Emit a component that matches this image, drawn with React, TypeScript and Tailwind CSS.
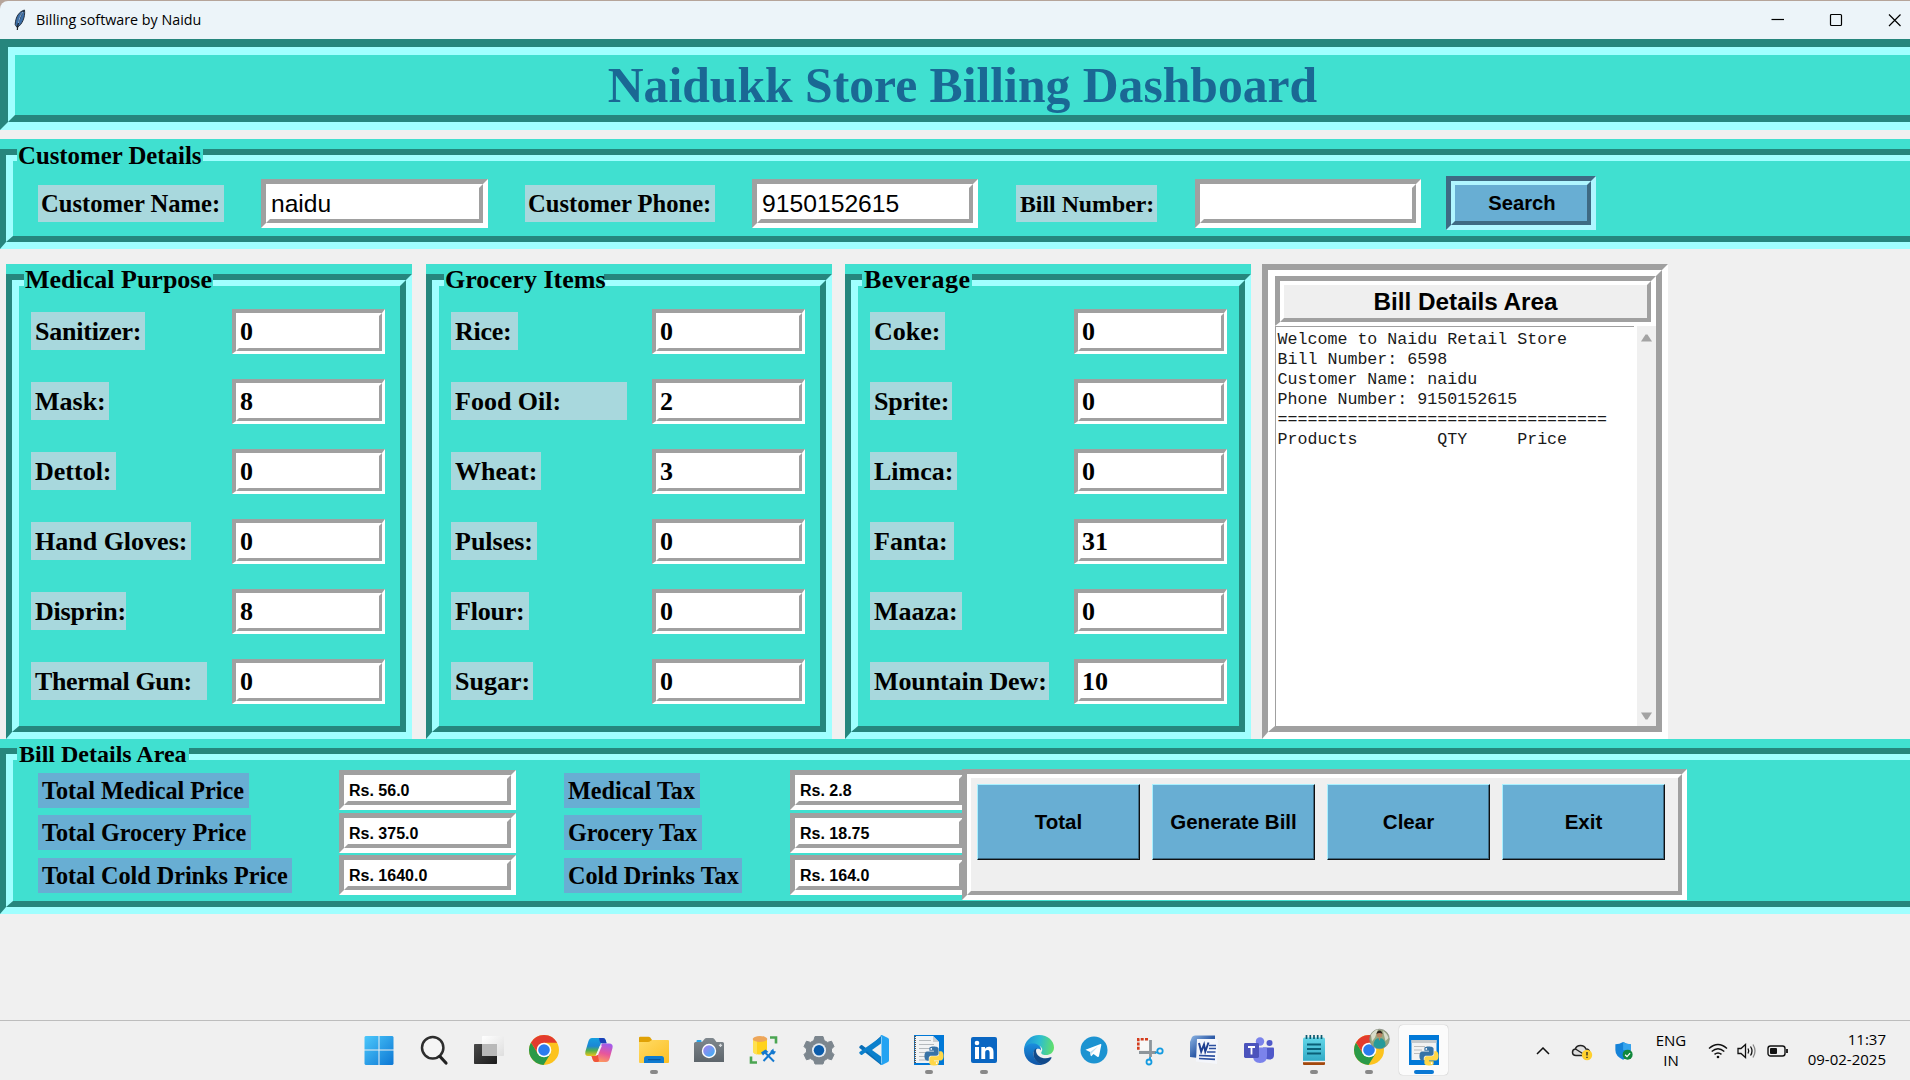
import React from "react";

const SERIF = "font-['Liberation_Serif',serif] font-bold text-black";
const SANS = "font-['Liberation_Sans',sans-serif] text-black";
const UI = "font-['Open_Sans',sans-serif]";

/* ---------- Tk style widgets ---------- */

type FrameProps = {
  title: string;
  titleClass: string;
  className: string;
  bodyClass?: string;
  children: React.ReactNode;
};

function LabelFrame({ title, titleClass, className, bodyClass = "", children }: FrameProps) {
  return (
    <section className={`relative flex shrink-0 flex-col bg-[#40e0d0] ${className}`}>
      <div className="flex grow flex-col border-[6px] border-b-[7px] border-t-[#26867d] border-r-[#a0ffff] border-b-[#a0ffff] border-l-[#26867d]">
        <div
          className={`grow border-[6px] border-l-[7px] border-t-[#a0ffff] border-r-[#26867d] border-b-[#26867d] border-l-[#a0ffff] ${bodyClass}`}
        >
          {children}
        </div>
      </div>
      <h2 className={`absolute bg-[#40e0d0] whitespace-pre ${SERIF} ${titleClass}`}>{title}</h2>
    </section>
  );
}

function Label({ text, className }: { text: string; className: string }) {
  return <div className={`shrink-0 whitespace-pre ${SERIF} ${className}`}>{text}</div>;
}

function BigEntry({ value, className }: { value: string; className: string }) {
  return (
    <div className={`shrink-0 border-[5px] border-t-[#a0a0a0] border-r-white border-b-white border-l-[#a0a0a0] ${className}`}>
      <div className="h-full border-[4px] border-t-white border-r-[#a0a0a0] border-b-[#a0a0a0] border-l-white bg-white">
        <div className="flex h-full items-center pt-[2px] pl-px whitespace-pre">{value}</div>
      </div>
    </div>
  );
}

function ItemEntry({ value }: { value: string }) {
  return (
    <div className="h-[45px] w-[153px] shrink-0 border-[4px] border-r-[3px] border-b-[3px] border-t-[#a0a0a0] border-r-white border-b-white border-l-[#a0a0a0]">
      <div className="flex h-full items-center border-[3px] border-t-white border-r-[#a0a0a0] border-b-[#a0a0a0] border-l-white bg-white">
        <span className={`pl-px text-[26px] leading-none ${SERIF}`}>{value}</span>
      </div>
    </div>
  );
}

type Item = { name: string; value: string; w: string };

function ItemPanel({ title, titleClass, className, labelCol, items }: {
  title: string; titleClass: string; className: string; labelCol: string; items: Item[];
}) {
  return (
    <LabelFrame title={title} className={`h-[475px] pt-[10px] ${className}`} titleClass={`top-0 text-[26px] leading-[32px] ${titleClass}`} bodyClass="pt-[10px] pl-[12px]">
      {items.map((it) => (
        <div key={it.name} className="flex h-[70px] items-center">
          <div className={`shrink-0 ${labelCol}`}>
            <Label text={it.name} className={`h-[38px] bg-[#a8d8dd] pl-[4px] text-[26px] leading-[39px] ${it.w}`} />
          </div>
          <ItemEntry value={it.value} />
        </div>
      ))}
    </LabelFrame>
  );
}

const medical: Item[] = [
  { name: "Sanitizer:", value: "0", w: "w-[114px] tracking-[-0.2px]" },
  { name: "Mask:", value: "8", w: "w-[78px]" },
  { name: "Dettol:", value: "0", w: "w-[85px]" },
  { name: "Hand Gloves:", value: "0", w: "w-[160px]" },
  { name: "Disprin:", value: "8", w: "w-[95px] tracking-[-0.2px]" },
  { name: "Thermal Gun:", value: "0", w: "w-[176px] tracking-[-0.35px]" },
];
const grocery: Item[] = [
  { name: "Rice:", value: "0", w: "w-[67px] tracking-[-0.3px]" },
  { name: "Food Oil:", value: "2", w: "w-[176px]" },
  { name: "Wheat:", value: "3", w: "w-[90px]" },
  { name: "Pulses:", value: "0", w: "w-[86px]" },
  { name: "Flour:", value: "0", w: "w-[78px] tracking-[-0.2px]" },
  { name: "Sugar:", value: "0", w: "w-[82px]" },
];
const beverage: Item[] = [
  { name: "Coke:", value: "0", w: "w-[75px]" },
  { name: "Sprite:", value: "0", w: "w-[82px] tracking-[-0.2px]" },
  { name: "Limca:", value: "0", w: "w-[87px]" },
  { name: "Fanta:", value: "31", w: "w-[84px]" },
  { name: "Maaza:", value: "0", w: "w-[92px]" },
  { name: "Mountain Dew:", value: "10", w: "w-[179px] tracking-[-0.1px]" },
];

const receipt = `Welcome to Naidu Retail Store
Bill Number: 6598
Customer Name: naidu
Phone Number: 9150152615
=================================
Products        QTY     Price`;

const totals = [
  { a: "Total Medical Price", aw: "w-[211px]", av: "Rs. 56.0", b: "Medical Tax", bw: "w-[136px]", bv: "Rs. 2.8" },
  { a: "Total Grocery Price", aw: "w-[213px]", av: "Rs. 375.0", b: "Grocery Tax", bw: "w-[138px]", bv: "Rs. 18.75" },
  { a: "Total Cold Drinks Price", aw: "w-[254px]", av: "Rs. 1640.0", b: "Cold Drinks Tax", bw: "w-[178px]", bv: "Rs. 164.0" },
];

/* ---------- Icons ---------- */

const PY =
  "M14.25.18l.9.2.73.26.59.3.45.32.34.34.25.34.16.33.1.3.04.26.02.2-.01.13V8.5l-.05.63-.13.55-.21.46-.26.38-.3.31-.33.25-.35.19-.35.14-.33.1-.3.07-.26.04-.21.02H8.77l-.69.05-.59.14-.5.22-.41.27-.33.32-.27.35-.2.36-.15.37-.1.35-.07.32-.04.27-.02.21v3.06H3.17l-.21-.03-.28-.07-.32-.12-.35-.18-.36-.26-.36-.36-.35-.46-.32-.59-.28-.73-.21-.88-.14-1.05-.05-1.23.06-1.22.16-1.04.24-.87.32-.71.36-.57.4-.44.42-.33.42-.24.4-.16.36-.1.32-.05.24-.01h.16l.06.01h8.16v-.83H6.18l-.01-2.75-.02-.37.05-.34.11-.31.17-.28.25-.26.31-.23.38-.2.44-.18.51-.15.58-.12.64-.1.71-.06.77-.04.84-.02 1.27.05z";

function Python() {
  return (
    <g transform="translate(10.5 11.5) scale(.79)">
      <path d={PY} fill="#3873a6" />
      <path d={PY} fill="#ffd748" transform="rotate(180 12 12)" />
      <circle cx="8.6" cy="3.1" r="1.1" fill="#fff" />
      <circle cx="15.4" cy="20.9" r="1.1" fill="#fff" />
    </g>
  );
}

function ChromeArt() {
  return (
    <>
      <circle cx="15" cy="15" r="15" fill="#fcc31e" />
      <path d="M14.5 30L21.5 18.7L8.9 18.5L2 7.5A15 15 0 0 0 14.500 30z" fill="#2a9a48" />
      <path d="M2 7.500L8.900 18.500L15 7.800H28.200A15 15 0 0 0 2 7.500z" fill="#e33b2e" />
      <circle cx="15" cy="15" r="7.300" fill="#fff" />
      <circle cx="15" cy="15" r="5.800" fill="#2b7cee" />
    </>
  );
}

const icons: { id: string; run?: "grey" | "blue"; art: React.ReactNode }[] = [
  {
    id: "start",
    art: (
      <>
        <defs><linearGradient id="win" x1="0" y1="0" x2="1" y2="1" gradientUnits="objectBoundingBox"><stop stopColor="#4cc8fb" /><stop offset="1" stopColor="#0d77d4" /></linearGradient></defs>
        <path fill="url(#win)" d="M1.500 1H14.500V14.500H.500V2zM15.500 1H28.500L29.500 2V14.500H15.500zM.500 15.500H14.500V30H1.500L.500 29zM15.500 15.500H29.500V29L28.500 30H15.500z" />
      </>
    ),
  },
  {
    id: "search",
    art: (
      <>
        <circle cx="13.700" cy="12.800" r="10.700" fill="#f5f5f5" stroke="#2e2e2e" strokeWidth="2.500" />
        <path d="M21 21.500L27 28" stroke="#222" strokeWidth="3.200" strokeLinecap="round" />
      </>
    ),
  },
  {
    id: "taskview",
    art: (
      <>
        <defs>
          <linearGradient id="tv1" x1="0" y1="0" x2="1" y2="1"><stop stopColor="#4a4a4a" /><stop offset="1" stopColor="#1b1b1b" /></linearGradient>
          <linearGradient id="tv2" x1="0" y1="0" x2="1" y2="1"><stop stopColor="#fff" /><stop offset="1" stopColor="#dedede" /></linearGradient>
        </defs>
        <rect y="9" width="23" height="20" rx=".8" fill="url(#tv1)" />
        <rect x="8" y="1" width="22" height="20" rx=".8" fill="url(#tv2)" />
        <rect x="8" y="9" width="15" height="12" fill="#b9b9b9" />
      </>
    ),
  },
  { id: "chrome", art: <ChromeArt /> },
  {
    id: "copilot",
    art: (
      <>
        <defs>
          <linearGradient id="cp1" x1="0" y1="0" x2="0" y2="1"><stop stopColor="#15a0e0" /><stop offset=".45" stopColor="#1b86d6" /><stop offset=".7" stopColor="#52b04e" /><stop offset="1" stopColor="#ecc419" /></linearGradient>
          <linearGradient id="cp2" x1=".6" y1="0" x2=".3" y2="1"><stop stopColor="#a45bea" /><stop offset=".5" stopColor="#e8569b" /><stop offset="1" stopColor="#ffa15a" /></linearGradient>
        </defs>
        <path d="M8 3H19q2 0 2.600 2L22.500 8H17l-4 11q-.700 2-2.600 2H4q-3.500 0-2.600-4.500L4.500 6Q5.500 3 8 3z" fill="url(#cp1)" />
        <path d="M15 3h4q2 0 2.600 2l1 3.500H18q-1.500 0-2.200-2z" fill="#1b3fb8" />
        <path d="M22 27H11.500q-2 0-2.600-2L7.500 21h4q1.500 0 2.200-2L17 10q.700-1.500 2.600-1.500H25q4.500 0 3.500 4.500L25.500 24Q24.500 27 22 27z" fill="url(#cp2)" />
        <path d="M7.500 21h4q1.500 0 2.200-1.500L15 26q-.5 1-2 1h-1.500q-2 0-2.600-2z" fill="#f0553c" />
        <path d="M16 10.500h2L14 20h-2.200z" fill="#f3f0f5" />
      </>
    ),
  },
  {
    id: "explorer", run: "grey",
    art: (
      <>
        <defs><linearGradient id="fo" x1="0" y1="0" x2="1" y2="1"><stop stopColor="#ffdb66" /><stop offset="1" stopColor="#fcbf24" /></linearGradient></defs>
        <path d="M0 3q0-1.200 1.200-1.200H9.500q1 0 1.800.8L13 5v3H0z" fill="#e0a106" />
        <path d="M0 7H9q1.500 0 2.400-1T14 5H29q1 0 1 1V27q0 1-1 1H1q-1 0-1-1z" fill="url(#fo)" />
        <path d="M5 28V23.500q0-2.500 2.500-2.500h15q2.500 0 2.500 2.500V28z" fill="#0f7bd0" />
        <path d="M9 24.700H21.500" stroke="#0a4f92" />
      </>
    ),
  },
  {
    id: "camera",
    art: (
      <>
        <defs>
          <linearGradient id="cam" x1="0" y1="0" x2="0" y2="1"><stop stopColor="#80888e" /><stop offset="1" stopColor="#5d656b" /></linearGradient>
          <linearGradient id="lens" x1="0" y1="0" x2="1" y2="1"><stop stopColor="#a97ff0" /><stop offset="1" stopColor="#38b3f4" /></linearGradient>
        </defs>
        <rect x="2.500" y="5" width="5" height="3" rx="1" fill="#27a4ea" />
        <path d="M0 8.500q0-1.500 1.500-1.500H8L10.500 4q.7-1 2-1h6q1 0 1.800 1L22.500 7h6Q30 7 30 8.500V27H0z" fill="url(#cam)" />
        <circle cx="15" cy="16" r="7.200" fill="#fff" />
        <circle cx="15" cy="16" r="5.800" fill="url(#lens)" />
        <path d="M26.500 8.800v3.200M24.900 10.400h3.200" stroke="#d8dcdf" strokeWidth="1.300" />
      </>
    ),
  },
  {
    id: "database",
    art: (
      <>
        <path d="M4 4V17q2 3 7 2.500t7-2.500V4z" fill="#ffd21a" />
        <path d="M4 4V17q1 2 4 2.500V4z" fill="#ffe04f" />
        <ellipse cx="11" cy="4" rx="7.300" ry="3" fill="#eda659" />
        <path d="M21 2.500H27V8.500M2 21.500V27.500H8" stroke="#4ba552" strokeWidth="2.600" fill="none" />
        <path d="M14.500 26L24.500 15.500M15 16.500L25 26.500" stroke="#1479cf" strokeWidth="2" />
        <path d="M12 17.500l4.500-3 3 2.500-3.500 1.500-2 2zM21.500 16l3-2.500v2.500l2.500.500-2 3-3-.500z" fill="#1479cf" />
      </>
    ),
  },
  {
    id: "settings",
    art: (
      <>
        <path d="M11 1.500h8l1.200 4 3.300 1.900 4-1.200 2.500 5.300-2.500 2.500v3l2.500 2.500-2.500 5.300-4-1.200-3.300 1.900-1.200 3.500h-8l-1.200-3.500-3.300-1.900-4 1.200L0 19.500 2.500 17v-3L0 11.500l2.500-5.300 4 1.200 3.300-1.900z" fill="#7c868e" stroke="#7c868e" strokeLinejoin="round" />
        <circle cx="15" cy="15.300" r="7" fill="#e3ebf2" />
        <circle cx="15" cy="15.300" r="5.200" fill="#0b5cab" />
      </>
    ),
  },
  {
    id: "vscode",
    art: (
      <>
        <path d="M22 1L8 13.800 3.300 10.200q-.8-.5-1.500 0L.5 11.500q-.6.700 0 1.400L22 30z" fill="#0a6db5" />
        <path d="M22 29L8 16.200 3.300 19.800q-.8.500-1.500 0L.5 18.500q-.6-.7 0-1.400L22 2z" fill="#0c80cc" />
        <path d="M22 8.500L13 15l9 6.500z" fill="#f0f0f0" />
        <path d="M21.500.300Q22.500-.300 23.500.300L29 3q1 .5 1 1.700V25.300q0 1.200-1 1.700l-5.500 2.700q-1 .500-2-.100L22.500 28V2z" fill="#24a3f2" />
      </>
    ),
  },
  {
    id: "idle", run: "grey",
    art: (
      <>
        <rect width="30" height="30" fill="#0078d7" />
        <path d="M1 1H19l6 6V28H1z" fill="#f1f3f4" />
        <path d="M1 1v27" stroke="#555" strokeDasharray="1 1" strokeWidth="2" />
        <path d="M5 5.500H17M5 9.500H20M5 13.500H18M5 17.500H13M5 21.500H12M5 25H12" stroke="#b5babd" strokeWidth="1.200" />
        <path d="M19 1v6h6z" fill="#c9ced1" />
        <Python />
      </>
    ),
  },
  {
    id: "linkedin", run: "grey",
    art: (
      <>
        <rect x="2" y="2" width="26" height="26" rx="2" fill="#0a66c2" />
        <path d="M6 12h4v12H6zM12.300 12H16v1.700q1.200-2 3.900-2c3.600 0 4.600 2.300 4.600 5.600V24h-3.900v-6c0-1.600-.2-3-2-3-1.900 0-2.400 1.300-2.400 3v6h-3.900z" fill="#fff" />
        <circle cx="8" cy="8" r="2.300" fill="#fff" />
      </>
    ),
  },
  {
    id: "edge",
    art: (
      <>
        <defs>
          <linearGradient id="ed1" x1="0" y1=".4" x2="1" y2=".5"><stop stopColor="#1b8fd9" /><stop offset=".5" stopColor="#2cbcd3" /><stop offset="1" stopColor="#62e069" /></linearGradient>
          <linearGradient id="ed2" x1="0" y1="0" x2="0" y2="1"><stop stopColor="#1a8ede" /><stop offset="1" stopColor="#1054a6" /></linearGradient>
        </defs>
        <path d="M0 15C.4 6 7 0 15 0 24 0 30 6 30 12.500c0 5-4 7.500-8 7.500-4 0-5.500-1.500-4.500-3 2-3 0-6.500-5-6.500C7 10.500 2 12 0 15z" fill="url(#ed1)" />
        <path d="M0 15C1 10.500 5 8 10 8.500c5 .500 7.500 4 7 7-1-3-8-2.500-7.500 4C10 25 15 28.500 19 29.500 9 32 0 25 0 15z" fill="url(#ed2)" />
        <path d="M10 15.500c-2.500 7 3 13 9 14 4-1 7-3.500 8.500-6.500.3-.8-.3-1-1-.7C20 25 12.500 22 12 16q0-1.500 1-3-2 .5-3 2.500z" fill="#114a8b" />
      </>
    ),
  },
  {
    id: "telegram",
    art: (
      <>
        <circle cx="15" cy="15" r="13.500" fill="#1c93d1" />
        <path d="M6.500 14.800L21.500 9q1-.3.800 1L20 21q-.4 1.400-1.700.7L14.500 19l-2 2q-.5.400-.7-.3L11 17z" fill="#fff" />
        <path d="M11 17l8-5.500-6.500 7-.7 2.300z" fill="#bfdff0" />
      </>
    ),
  },
  {
    id: "snip",
    art: (
      <>
        <path d="M14 4.300H4.300V15" stroke="#d43c1c" strokeWidth="2.600" strokeDasharray="3 1.300" fill="none" />
        <rect x="6" y="6" width="9" height="9" fill="#f8f8f8" />
        <path d="M16.500 5V22M5 17.500H22" stroke="#8d959b" strokeWidth="2.800" />
        <circle cx="26" cy="16" r="2.700" fill="none" stroke="#159be0" strokeWidth="1.800" />
        <circle cx="15" cy="27" r="2.500" fill="none" stroke="#159be0" strokeWidth="1.800" />
        <path d="M21 18l3-1M16 22v3" stroke="#159be0" strokeWidth="1.800" />
      </>
    ),
  },
  {
    id: "word",
    art: (
      <>
        <defs><linearGradient id="wd" x1="0" y1="0" x2="1" y2="1"><stop stopColor="#8eb6e4" /><stop offset=".5" stopColor="#2f5ca8" /><stop offset="1" stopColor="#1d3e88" /></linearGradient></defs>
        <path d="M3 2Q4 .5 6 .5H26V25L1 22V7z" fill="url(#wd)" />
        <path d="M8 4H27.500L29 5.500 28 29 7 26.500z" fill="#f4f6fb" />
        <path d="M20 10.500h7M20 13.500h7M10 20.500l16 .700M10 23.500l16 .900M18 17h8.500" stroke="#2b4fa0" strokeWidth="1.700" />
        <path d="M10 8l2.200 8.500L15 9.500l1.300 7L19.500 7.500" stroke="#1e3f90" strokeWidth="2" fill="none" />
      </>
    ),
  },
  {
    id: "teams",
    art: (
      <>
        <circle cx="16" cy="6.500" r="4.200" fill="#7b83eb" />
        <circle cx="25.500" cy="8" r="3" fill="#5059c9" />
        <path d="M19 12.500H29q1 0 1 1V20q0 4.500-4.500 4.500T19 21z" fill="#5059c9" />
        <path d="M9 12.500H22q1 0 1 1V21q0 7-7 7t-7-7z" fill="#7b83eb" />
        <rect y="8" width="15" height="15" rx="1.400" fill="#4b53bc" />
        <path d="M4 12h7M7.500 12v7.500" stroke="#fff" strokeWidth="1.800" />
      </>
    ),
  },
  {
    id: "notepad", run: "grey",
    art: (
      <>
        <defs><linearGradient id="np" x1="0" y1="0" x2="0" y2="1"><stop stopColor="#63d6e8" /><stop offset="1" stopColor="#2fa8c4" /></linearGradient></defs>
        <path d="M4 26H26v3q0 1-1 1H5q-1 0-1-1z" fill="#a3480d" />
        <path d="M4 4q0-1.500 1.500-1.500h19Q26 2.500 26 4V27H4z" fill="url(#np)" />
        <path d="M4 26.500H26" stroke="#f2f2f2" strokeWidth="1.400" />
        <path d="M8 9.500H22M8 14H22M8 18.500H22" stroke="#0a5f77" strokeWidth="1.800" />
        <path d="M7.500 0v4M11.300 0v4M15 0v4M18.700 0v4M22.500 0v4" stroke="#0b5a70" strokeWidth="1.700" />
      </>
    ),
  },
  {
    id: "chrome-profile", run: "grey",
    art: (
      <>
        <ChromeArt />
        <circle cx="25.500" cy="4" r="9.800" fill="#97a77f" stroke="#878a80" strokeWidth=".8" />
        <path d="M17 0q3-5 7-5.500l-3 8-3 4zM29-4q4 2 5.500 7l-3 3z" fill="#d8dccb" />
        <path d="M19.500 11q0-8 6-8t6 8q-2.500 2.500-6 2.500t-6-2.500z" fill="#269a9a" />
        <circle cx="25.500" cy="-.500" r="2.900" fill="#b98562" />
        <path d="M22.500-1q.5-3.500 3-3.500t3 3.500q-3-1.800-6 0z" fill="#2c241e" />
        <path d="M24.500 3l1 3 1-3z" fill="#b98562" />
      </>
    ),
  },
  {
    id: "tk", run: "blue",
    art: (
      <>
        <rect width="30" height="30" fill="#0078d7" />
        <rect x="2.500" y="5" width="25" height="20" fill="#f2f2f2" />
        <path d="M2.500 6.500h25" stroke="#c5c9cc" strokeWidth="3" />
        <path d="M5 11.500H16M5 15H13M5 18.500H11" stroke="#bcbcbc" strokeWidth="1.200" />
        <Python />
      </>
    ),
  },
];

function Feather() {
  return (
    <svg className="ml-[14px] h-[22px] w-[12px]" viewBox="0 0 12 22">
      <path d="M10.500 1C5 2.500 1.500 8 1.200 15.500L3 18.500C8 16 11.500 8 10.500 1z" fill="#3b6ea8" stroke="#26313f" strokeWidth="1" />
      <path d="M9.500 2C6 7 4 12 3.300 21" stroke="#1c2027" strokeWidth="1.200" fill="none" />
      <path d="M9 3C6.500 6 5 10 4.500 14" stroke="#8fb6e0" strokeWidth="1" fill="none" />
    </svg>
  );
}

/* ---------- Page ---------- */

export default function App() {
  return (
    <div className="flex h-[1080px] w-[1910px] flex-col overflow-hidden bg-[#f0f0f0]">
      <div className="h-[39px] shrink-0 bg-[#b5a49a] pt-px">
        <header className="flex h-full items-center rounded-tl-[8px] bg-[#ecf4f9]">
          <Feather />
          <span className={`ml-[10px] pt-px text-[14.3px] leading-none text-black ${UI}`}>Billing software by Naidu</span>
          <svg className="ml-auto mr-[8px] h-[14px] w-[131px]" viewBox="0 0 131 14" fill="none" stroke="#000" strokeWidth="1.200">
            <path d="M0.500 6.500h12.500" />
            <rect x="59.500" y="1.500" width="11" height="11" rx="1" />
            <path d="M118 1.500l11.500 11.500M129.500 1.500l-11.500 11.500" />
          </svg>
        </header>
      </div>

      <div className="h-[91px] w-[1925px] shrink-0 border-[8px] border-t-[#26867d] border-r-[#a0ffff] border-b-[#a0ffff] border-l-[#26867d] bg-[#40e0d0]">
        <div className="h-full border-[7px] border-t-[8px] border-t-[#a0ffff] border-r-[#26867d] border-b-[#26867d] border-l-[#a0ffff]">
          <h1 className="text-center font-['Liberation_Serif',serif] text-[49.65px] leading-[61px] font-bold text-[#1a6894]">
            Naidukk Store Billing Dashboard
          </h1>
        </div>
      </div>

      <LabelFrame
        title="Customer Details"
        className="mt-[9px] h-[110px] w-[1925px] pt-[10px]"
        titleClass="left-[17px] top-[2px] h-[28px] w-[186px] pl-px text-[24.8px] leading-[29px]"
        bodyClass="flex items-center pt-[9px] pl-[25px]"
      >
        <Label text="Customer Name:" className="h-[37px] w-[186px] bg-[#a8d8dd] pl-[3px] text-[24.6px] leading-[38px]" />
        <BigEntry value="naidu" className={`ml-[37px] h-[49px] w-[227px] text-[24.6px] leading-none ${SANS}`} />
        <Label text="Customer Phone:" className="ml-[37px] h-[37px] w-[190px] bg-[#a8d8dd] pl-[3px] text-[24.6px] leading-[38px]" />
        <BigEntry value="9150152615" className={`ml-[37px] h-[49px] w-[226px] text-[24.7px] leading-none ${SANS}`} />
        <Label text="Bill Number:" className="ml-[38px] h-[37px] w-[141px] bg-[#a8d8dd] pl-[4px] text-[23.8px] leading-[38px]" />
        <BigEntry value="" className="ml-[38px] h-[49px] w-[226px]" />
        <button className="ml-[25px] h-[54px] w-[150px] shrink-0 border-[5px] border-t-[#3e6a83] border-r-[#b0f6ff] border-b-[#b0f6ff] border-l-[#3e6a83] bg-[#68aed3]">
          <span className={`flex h-full items-center justify-center border-[4px] border-t-[#b0f6ff] border-r-[#3e6a83] border-b-[#3e6a83] border-l-[#b0f6ff] pl-[2px] text-[20.2px] leading-none font-bold ${SANS}`}>
            Search
          </span>
        </button>
      </LabelFrame>

      <div className="mt-[15px] flex h-[475px] shrink-0">
        <ItemPanel title="Medical Purpose" className="ml-[6px] w-[406px]" titleClass="left-[18px] w-[189px] pl-px" labelCol="w-[201px]" items={medical} />
        <ItemPanel title="Grocery Items" className="ml-[14px] w-[406px]" titleClass="left-[18px] w-[160px] pl-px" labelCol="w-[201px]" items={grocery} />
        <ItemPanel title="Beverage" className="ml-[13px] w-[406px]" titleClass="left-[17px] w-[110px] pl-[2px] tracking-[0.5px]" labelCol="w-[204px]" items={beverage} />

        <section className="ml-[11px] w-[406px] shrink-0 border-[6px] border-b-[7px] border-t-[#a0a0a0] border-r-white border-b-white border-l-[#a0a0a0]">
          <div className="flex h-full flex-col border-[6px] border-l-[7px] border-t-white border-r-[#a0a0a0] border-b-[#a0a0a0] border-l-white bg-white">
            <div className="h-[50px] shrink-0 border-[5px] border-b-[4px] border-t-[#a0a0a0] border-r-white border-b-white border-l-[#a0a0a0]">
              <div className={`h-full border-[4px] border-t-white border-r-[#a0a0a0] border-b-[#a0a0a0] border-l-white bg-[#efefef] text-center text-[24.3px] leading-[33px] font-bold ${SANS}`}>
                Bill Details Area
              </div>
            </div>
            <div className="flex grow">
              <div className="mr-[3px] grow border-t border-l border-[#a0a0a0] bg-white">
                <pre className="pt-[3px] pl-[1.5px] font-['Liberation_Mono',monospace] text-[16.65px] leading-[20px] text-[#1a1a1a]">{receipt}</pre>
              </div>
              <div className="flex w-[19px] shrink-0 flex-col justify-between bg-[#f0f0f0] px-[4px] pt-[8px] pb-[6px]">
                <svg className="h-[8px] w-[11px]" viewBox="0 0 11 8"><path d="M4.500.500h2L11 7.500H0z" fill="#a3a3a3" /></svg>
                <svg className="h-[8px] w-[11px]" viewBox="0 0 11 8"><path d="M4.500 7.500h2L11 .500H0z" fill="#a3a3a3" /></svg>
              </div>
            </div>
          </div>
        </section>
      </div>

      <LabelFrame
        title="Bill Details Area"
        className="h-[175px] w-[1925px] pt-[9px]"
        titleClass="left-[17px] top-[1px] h-[27px] w-[172px] pl-[2px] text-[24px] leading-[28px]"
        bodyClass="flex pl-[25px]"
      >
        <div className="mt-[9px] shrink-0">
          {totals.map((t) => (
            <div key={t.a} className="flex h-[42.5px] items-center">
              <div className="w-[301px]">
                <Label text={t.a} className={`h-[35px] bg-[#68aed3] pl-[4px] text-[24.2px] leading-[35px] ${t.aw}`} />
              </div>
              <BigEntry value={t.av} className={`h-[40px] w-[177px] text-[16px] leading-[20px] font-bold ${SANS}`} />
              <div className="ml-[48px] w-[226px]">
                <Label text={t.b} className={`h-[35px] bg-[#68aed3] pl-[4px] text-[24.2px] leading-[35px] ${t.bw}`} />
              </div>
              <BigEntry value={t.bv} className={`h-[40px] w-[178px] text-[16px] leading-[20px] font-bold ${SANS}`} />
            </div>
          ))}
        </div>
        <div className="mt-[9px] -ml-[6px] h-[131px] w-[725px] shrink-0 border-[5px] border-t-[#a0a0a0] border-r-white border-b-white border-l-[#a0a0a0]">
          <div className="flex h-full gap-[12px] border-[4px] border-t-white border-r-[#a0a0a0] border-b-[#a0a0a0] border-l-white bg-[#efefef] pt-[6px] pl-[6px]">
            {["Total", "Generate Bill", "Clear", "Exit"].map((b) => (
              <button key={b} className={`h-[76px] w-[163px] shrink-0 border border-t-[#a8f0ff] border-r-[#101010] border-b-[#101010] border-l-[#a8f0ff] bg-[#68aed3] text-[20.5px] font-bold shadow-[inset_-1px_-1px_0_#3e6a83] ${SANS}`}>
                {b}
              </button>
            ))}
          </div>
        </div>
      </LabelFrame>

      <footer className="mt-auto flex h-[60px] shrink-0 border-t border-[#bdbdbd] bg-[#f0f0f0]">
        <nav className="ml-[351px] flex">
          {icons.map((ic) => (
            <div key={ic.id} className="flex w-[55px] shrink-0 justify-center pt-[4px]">
              <div className={`flex h-[50px] w-[49px] flex-col items-center rounded-[4px] pt-[10px] ${ic.run === "blue" ? "bg-[#fbfbfb] shadow-[0_0_1px_#999]" : ""}`}>
                <svg className="h-[30px] w-[30px] overflow-visible" viewBox="0 0 30 30">{ic.art}</svg>
                {ic.run && <div className={`mt-[5px] h-[4px] rounded-full ${ic.run === "blue" ? "w-[20px] bg-[#0a78d4]" : "w-[8px] bg-[#888]"}`} />}
              </div>
            </div>
          ))}
        </nav>
        <div className={`mr-[24px] ml-auto flex items-center text-[15px] leading-[20px] text-black ${UI}`}>
          <svg className="h-[8px] w-[14px]" viewBox="0 0 14 8" fill="none" stroke="#111" strokeWidth="1.500"><path d="M1 7l6-6 6 6" /></svg>
          <svg className="ml-[21px] h-[20px] w-[22px]" viewBox="0 0 22 20">
            <path d="M5 14.500q-3.500-.2-3.500-3.300 0-2.700 2.800-3.200Q5.500 4.500 9.500 4.500q4 0 5.500 3.500 3.500.2 3.500 3.300t-3.500 3.200z" fill="#dedede" stroke="#222" strokeWidth="1.500" />
            <path d="M4.500 8L14 14" stroke="#222" strokeWidth="1.400" />
            <circle cx="16" cy="14" r="5.200" fill="#ffd02e" />
            <path d="M16 11v3.500M16 15.800v1.200" stroke="#222" strokeWidth="1.300" />
          </svg>
          <svg className="ml-[20px] h-[20px] w-[22px]" viewBox="0 0 22 22">
            <path d="M10 1q4 2.500 8.500 2.500V10q0 7-8.500 10.500Q1.500 17 1.500 10V3.500Q6 3.500 10 1z" fill="#1583d8" />
            <path d="M10 1q4 2.500 8.500 2.500V10H10z" fill="#35a5ee" />
            <circle cx="15" cy="15" r="5.500" fill="#12883c" />
            <path d="M12.300 15.200l2 2 3.400-3.800" stroke="#fff" strokeWidth="1.400" fill="none" />
          </svg>
          <div className="ml-[18px] w-[36px] -translate-y-px text-center">ENG<br />IN</div>
          <svg className="ml-[19px] h-[18px] w-[20px]" viewBox="0 0 20 18" fill="none" stroke="#111" strokeWidth="1.400">
            <path d="M1 6.500q9-8 18 0M3.700 9.500q6.300-5.500 12.600 0M6.500 12.400q3.500-3 7 0" />
            <circle cx="10" cy="15" r="1.300" fill="#111" stroke="none" />
          </svg>
          <svg className="ml-[9px] h-[18px] w-[20px]" viewBox="0 0 20 18" fill="none" stroke="#111" strokeWidth="1.300">
            <path d="M1 6.500h3L8.500 2.500v13L4 11.500H1zM11 6.500q1.500 2.500 0 5M13.500 4.500q3 4.500 0 9" />
            <path d="M16 2.500q4 6.500 0 13" stroke="#888" />
          </svg>
          <svg className="ml-[10px] h-[14px] w-[22px]" viewBox="0 0 22 14">
            <rect x="1" y="2" width="17" height="10" rx="2.500" fill="none" stroke="#111" strokeWidth="1.400" />
            <rect x="3" y="4" width="7" height="6" rx="1" fill="#111" />
            <path d="M20 5v4" stroke="#111" strokeWidth="1.800" />
          </svg>
          <div className="ml-[17px] w-[80px] -translate-y-[2px] text-right">11:37<br />09-02-2025</div>
        </div>
      </footer>
    </div>
  );
}
